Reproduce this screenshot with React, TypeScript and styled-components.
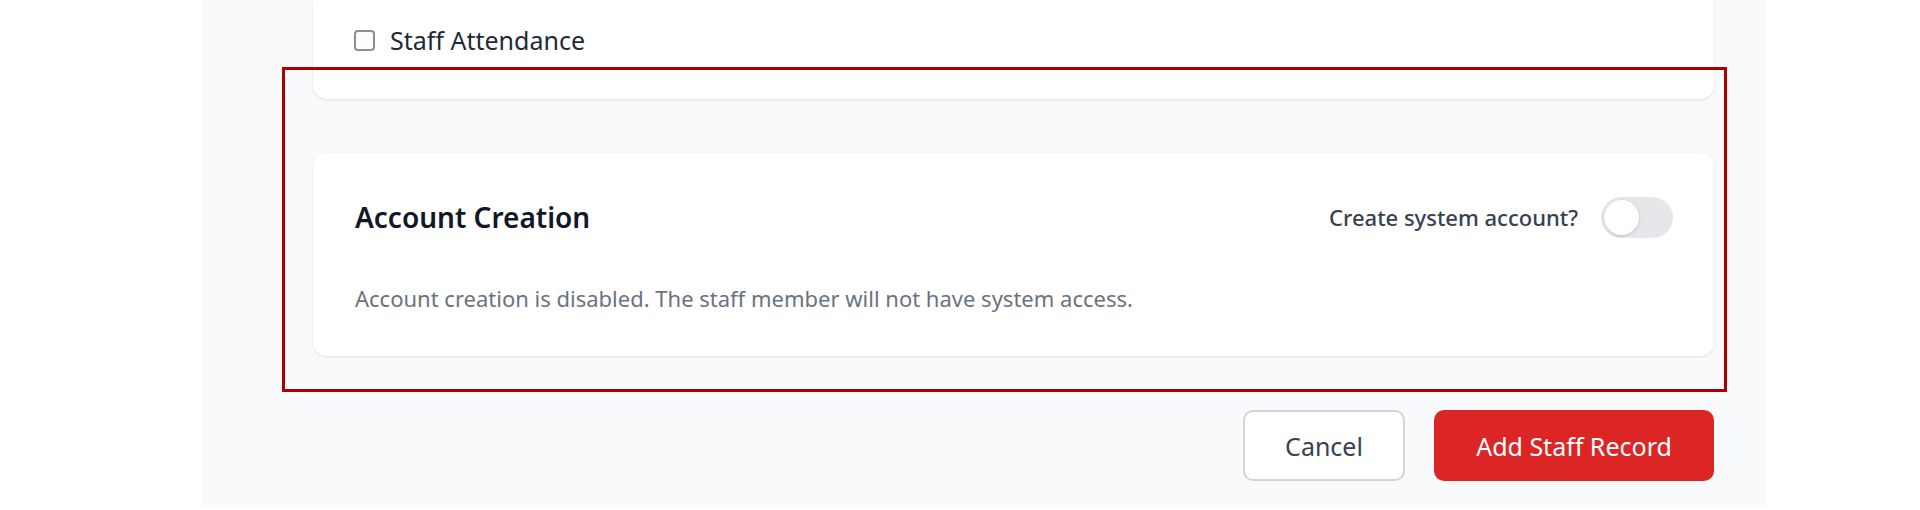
import React, { useState } from "react";
import styled, { createGlobalStyle } from "styled-components";

const GlobalStyle = createGlobalStyle`
  html, body {
    margin: 0;
    padding: 0;
    background: #ffffff;
    font-family: "Noto Sans", "Open Sans", "Liberation Sans", sans-serif;
  }
  * {
    box-sizing: border-box;
  }
`;

const Page = styled.div`
  width: 1920px;
  height: 510px;
  overflow: hidden;
  background: #ffffff;
`;

const Panel = styled.main`
  position: relative;
  margin-left: 202px;
  width: 1564px;
  height: 507px;
  background: #f9fafb;
  padding: 0 52px 0 111px;
  display: flex;
  flex-direction: column;
`;

const Card = styled.section<{ $cut?: boolean }>`
  background: #ffffff;
  border-radius: ${({ $cut }) => ($cut ? "0 0 14px 14px" : "14px")};
  box-shadow: 0 1px 3px rgba(15, 23, 42, 0.08), 0 1px 2px rgba(15, 23, 42, 0.04);
  padding: ${({ $cut }) => ($cut ? "23px 41px 42px" : "40px 41px 41px 42px")};
`;

const CheckRow = styled.label`
  display: flex;
  align-items: center;
  gap: 15px;
  font-size: 25px;
  line-height: 34px;
  color: #1f2937;
`;

const CheckBox = styled.span`
  width: 21px;
  height: 21px;
  border: 2px solid #8b8f96;
  border-radius: 4px;
  background: #ffffff;
  flex-shrink: 0;
`;

const Stack = styled.div`
  display: flex;
  flex-direction: column;
  gap: 54px;
`;

const CardHeader = styled.div`
  display: flex;
  align-items: center;
  justify-content: space-between;
  height: 48px;
`;

const Title = styled.h3`
  margin: 0;
  font-size: 28px;
  font-weight: 600;
  color: #111827;
`;

const SwitchLabel = styled.div`
  display: flex;
  align-items: center;
  gap: 23px;
  font-size: 22px;
  font-weight: 500;
  color: #374151;
`;

const Track = styled.button<{ $on: boolean }>`
  width: 72px;
  height: 41px;
  border: none;
  border-radius: 999px;
  padding: 3px;
  background: ${({ $on }) => ($on ? "#dc2626" : "#e5e7eb")};
  display: flex;
  justify-content: ${({ $on }) => ($on ? "flex-end" : "flex-start")};
  cursor: pointer;
`;

const Knob = styled.span`
  width: 35px;
  height: 35px;
  border-radius: 50%;
  background: #ffffff;
  box-shadow: 0 1px 3px rgba(0, 0, 0, 0.18);
`;

const Note = styled.p`
  margin: 40px 0 0;
  font-size: 22px;
  line-height: 34px;
  color: #6b7280;
`;

const Actions = styled.div`
  display: flex;
  justify-content: flex-end;
  gap: 29px;
  margin-top: 54px;
`;

const Button = styled.button<{ $primary?: boolean }>`
  height: 71px;
  padding: 0 ${({ $primary }) => ($primary ? "36px" : "38px")};
  min-width: ${({ $primary }) => ($primary ? "280px" : "162px")};
  border-radius: 10px;
  font-family: inherit;
  font-size: 25px;
  font-weight: 400;
  border: ${({ $primary }) => ($primary ? "none" : "2px solid #d1d5db")};
  background: ${({ $primary }) => ($primary ? "#dc2626" : "#ffffff")};
  color: ${({ $primary }) => ($primary ? "#ffffff" : "#374151")};
  cursor: pointer;
`;

const Highlight = styled.div`
  position: absolute;
  left: 80px;
  top: 67px;
  width: 1445px;
  height: 325px;
  border: 3px solid #ad0000;
  pointer-events: none;
`;

export default function App() {
  const [account, setAccount] = useState(false);

  return (
    <Page>
      <GlobalStyle />
      <Panel>
        <Stack>
          <Card $cut>
            <CheckRow>
              <CheckBox />
              Staff Attendance
            </CheckRow>
          </Card>
          <Card>
            <CardHeader>
              <Title>Account Creation</Title>
              <SwitchLabel>
                Create system account?
                <Track $on={account} onClick={() => setAccount(!account)}>
                  <Knob />
                </Track>
              </SwitchLabel>
            </CardHeader>
            <Note>
              Account creation is disabled. The staff member will not have system access.
            </Note>
          </Card>
        </Stack>
        <Actions>
          <Button>Cancel</Button>
          <Button $primary>Add Staff Record</Button>
        </Actions>
        <Highlight />
      </Panel>
    </Page>
  );
}
